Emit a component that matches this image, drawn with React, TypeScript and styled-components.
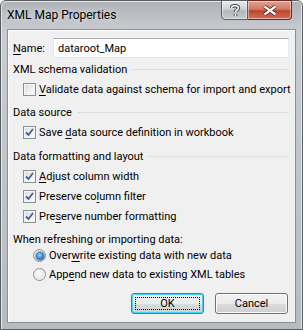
import React from "react";
import styled, { createGlobalStyle } from "styled-components";

const GlobalStyle = createGlobalStyle`
  html, body {
    margin: 0;
    padding: 0;
    background: #ffffff;
  }
  body {
    font-family: Roboto, "Noto Sans", sans-serif;
    font-size: 11px;
    color: #000;
  }
`;

const Window = styled.div`
  width: 303px;
  height: 330px;
  box-sizing: border-box;
  border: 1px solid #5a5d60;
  border-radius: 6px 6px 0 0;
  background: linear-gradient(180deg, #aeb2b6 0px, #c9ccd0 30px, #b7bbbf 100%);
  display: flex;
  flex-direction: column;
  padding: 0 6px 6px 6px;
  box-shadow: inset 1px 1px 0 #e4e6e8, inset -1px 0 0 #e4e6e8;
`;

const TitleBar = styled.div`
  height: 28px;
  display: flex;
  align-items: flex-start;
  justify-content: space-between;
  flex-shrink: 0;
`;

const Title = styled.div`
  padding: 7px 0 0 0;
  font-size: 12px;
  color: #000;
  text-shadow: 0 0 6px rgba(255, 255, 255, 0.9);
`;

const Controls = styled.div`
  display: flex;
  margin-right: 4px;
  margin-top: -1px;
`;

const CaptionButton = styled.div<{ $kind: "help" | "close" }>`
  width: ${(p) => (p.$kind === "close" ? "44px" : "27px")};
  height: 20px;
  box-sizing: border-box;
  border: 1px solid ${(p) => (p.$kind === "close" ? "#6b2a24" : "#595c60")};
  border-left-width: ${(p) => (p.$kind === "close" ? "0" : "1px")};
  border-radius: ${(p) => (p.$kind === "close" ? "0 0 4px 0" : "0 0 0 4px")};
  background: ${(p) =>
    p.$kind === "close"
      ? "linear-gradient(180deg, #e3a092 0%, #d17a67 45%, #c0452c 55%, #d2705a 100%)"
      : "linear-gradient(180deg, #e8eaec 0%, #cfd2d5 45%, #b2b6ba 55%, #c8cbce 100%)"};
  box-shadow: inset 0 0 0 1px rgba(255, 255, 255, 0.45);
  display: flex;
  align-items: center;
  justify-content: center;
`;

const Client = styled.div`
  flex: 1;
  background: #f0f0f0;
  border: 1px solid #8b8f93;
  box-shadow: inset 1px 1px 0 #ffffff;
  display: flex;
  flex-direction: column;
  padding: 8px 6px 0 5px;
`;

const NameRow = styled.div`
  height: 20px;
  display: flex;
  align-items: center;
`;

const NameLabel = styled.label`
  width: 40px;
`;

const TextBox = styled.div`
  flex: 1;
  height: 20px;
  box-sizing: border-box;
  border: 1px solid #e3e9ef;
  border-top-color: #abadb3;
  background: #fff;
  padding: 0 4px;
  display: flex;
  align-items: center;
`;

const SectionHeader = styled.div<{ $gap: number; $line?: boolean }>`
  height: 20px;
  margin-top: ${(p) => p.$gap}px;
  display: flex;
  align-items: center;
  gap: 6px;
  &::after {
    content: "";
    flex: 1;
    height: 1px;
    background: ${(p) => (p.$line === false ? "transparent" : "#d5dfe5")};
  }
`;

const OptionRow = styled.div<{ $indent: number; $height?: number }>`
  height: ${(p) => p.$height ?? 20}px;
  display: flex;
  align-items: center;
  padding-left: ${(p) => p.$indent}px;
  gap: 3px;
  white-space: nowrap;
`;

const RadioGroup = styled.div`
  margin-top: -3px;
  display: flex;
  flex-direction: column;
`;

const Box = styled.span<{ $round?: boolean }>`
  width: 13px;
  height: 13px;
  box-sizing: border-box;
  border: 1px solid #8e8f8f;
  border-radius: ${(p) => (p.$round ? "50%" : "0")};
  background: ${(p) =>
    p.$round
      ? "radial-gradient(circle at 40% 35%, #ffffff 0%, #e6e6e6 60%, #cfcfcf 100%)"
      : "linear-gradient(135deg, #dcdcdc 0%, #f4f4f4 70%, #ffffff 100%)"};
  box-shadow: inset 0 0 0 1px #f4f4f4;
  display: inline-flex;
  align-items: center;
  justify-content: center;
  flex-shrink: 0;
`;

const Dot = styled.span`
  width: 8px;
  height: 8px;
  border-radius: 50%;
  background: radial-gradient(circle at 45% 40%, #a6dcff 0%, #3a8ad0 45%, #1c4f86 100%);
  box-shadow: 0 0 0 1px rgba(30, 70, 120, 0.45);
`;

const Key = styled.span`
  text-decoration: underline;
  text-underline-offset: 2px;
`;

const ButtonRow = styled.div`
  margin-top: 9px;
  display: flex;
  justify-content: flex-end;
  gap: 11px;
  padding-right: 1px;
`;

const Button = styled.div<{ $default?: boolean }>`
  width: 73px;
  height: 21px;
  box-sizing: border-box;
  border: 1px solid ${(p) => (p.$default ? "#3c7fb1" : "#707070")};
  border-radius: 3px;
  background: linear-gradient(180deg, #f2f2f2 0%, #ebebeb 50%, #dddddd 51%, #cfcfcf 100%);
  box-shadow: inset 0 0 0 1px ${(p) => (p.$default ? "#48d2fd" : "#fcfcfc")};
  display: flex;
  align-items: center;
  justify-content: center;
  position: relative;
`;

const FocusRect = styled.span`
  position: absolute;
  inset: 3px;
  border: 1px dotted #000;
`;

function Check({ checked }: { checked: boolean }) {
  return (
    <Box>
      {checked && (
        <svg width="9" height="9" viewBox="0 0 9 9">
          <path d="M1 4.5 L3.5 7 L8 1" fill="none" stroke="#4a5f97" strokeWidth="1.8" />
        </svg>
      )}
    </Box>
  );
}

function Radio({ checked }: { checked: boolean }) {
  return <Box $round>{checked && <Dot />}</Box>;
}

export default function App() {
  return (
    <>
      <GlobalStyle />
      <Window>
        <TitleBar>
          <Title>XML Map Properties</Title>
          <Controls>
            <CaptionButton $kind="help">
              <svg width="10" height="13" viewBox="0 0 10 13">
                <path
                  d="M1.5 4 C1.5 1 8.5 1 8.5 4 C8.5 6 5.5 6 5.5 8 M5.5 10 L5.5 12"
                  fill="none"
                  stroke="#3d4043"
                  strokeWidth="3.4"
                />
                <path
                  d="M1.5 4 C1.5 1 8.5 1 8.5 4 C8.5 6 5.5 6 5.5 8 M5.5 10 L5.5 12"
                  fill="none"
                  stroke="#ffffff"
                  strokeWidth="1.6"
                />
              </svg>
            </CaptionButton>
            <CaptionButton $kind="close">
              <svg width="16" height="11" viewBox="0 0 16 11">
                <path d="M2.5 1.5 L13.5 9.5 M13.5 1.5 L2.5 9.5" stroke="#5a2018" strokeWidth="4" />
                <path d="M2.5 1.5 L13.5 9.5 M13.5 1.5 L2.5 9.5" stroke="#ffffff" strokeWidth="2.2" />
              </svg>
            </CaptionButton>
          </Controls>
        </TitleBar>
        <Client>
          <NameRow>
            <NameLabel>
              <Key>N</Key>ame:
            </NameLabel>
            <TextBox>dataroot_Map</TextBox>
          </NameRow>

          <SectionHeader $gap={1}>XML schema validation</SectionHeader>
          <OptionRow $indent={10}>
            <Check checked={false} />
            <span>
              <Key>V</Key>alidate data against schema for import and export
            </span>
          </OptionRow>

          <SectionHeader $gap={3}>Data source</SectionHeader>
          <OptionRow $indent={10}>
            <Check checked />
            <span>
              Save <Key>d</Key>ata source definition in workbook
            </span>
          </OptionRow>

          <SectionHeader $gap={4}>Data formatting and layout</SectionHeader>
          <OptionRow $indent={10}>
            <Check checked />
            <span>
              <Key>A</Key>djust column width
            </span>
          </OptionRow>
          <OptionRow $indent={10}>
            <Check checked />
            <span>
              Preserve co<Key>l</Key>umn filter
            </span>
          </OptionRow>
          <OptionRow $indent={10}>
            <Check checked />
            <span>
              Pre<Key>s</Key>erve number formatting
            </span>
          </OptionRow>

          <SectionHeader $gap={3} $line={false}>
            When refreshing or importing data:
          </SectionHeader>
          <RadioGroup>
            <OptionRow $indent={20} $height={19}>
              <Radio checked />
              <span>
                Over<Key>w</Key>rite existing data with new data
              </span>
            </OptionRow>
            <OptionRow $indent={20} $height={19}>
              <Radio checked={false} />
              <span>
                App<Key>e</Key>nd new data to existing XML tables
              </span>
            </OptionRow>
          </RadioGroup>

          <ButtonRow>
            <Button $default>
              <FocusRect />
              OK
            </Button>
            <Button>Cancel</Button>
          </ButtonRow>
        </Client>
      </Window>
    </>
  );
}
